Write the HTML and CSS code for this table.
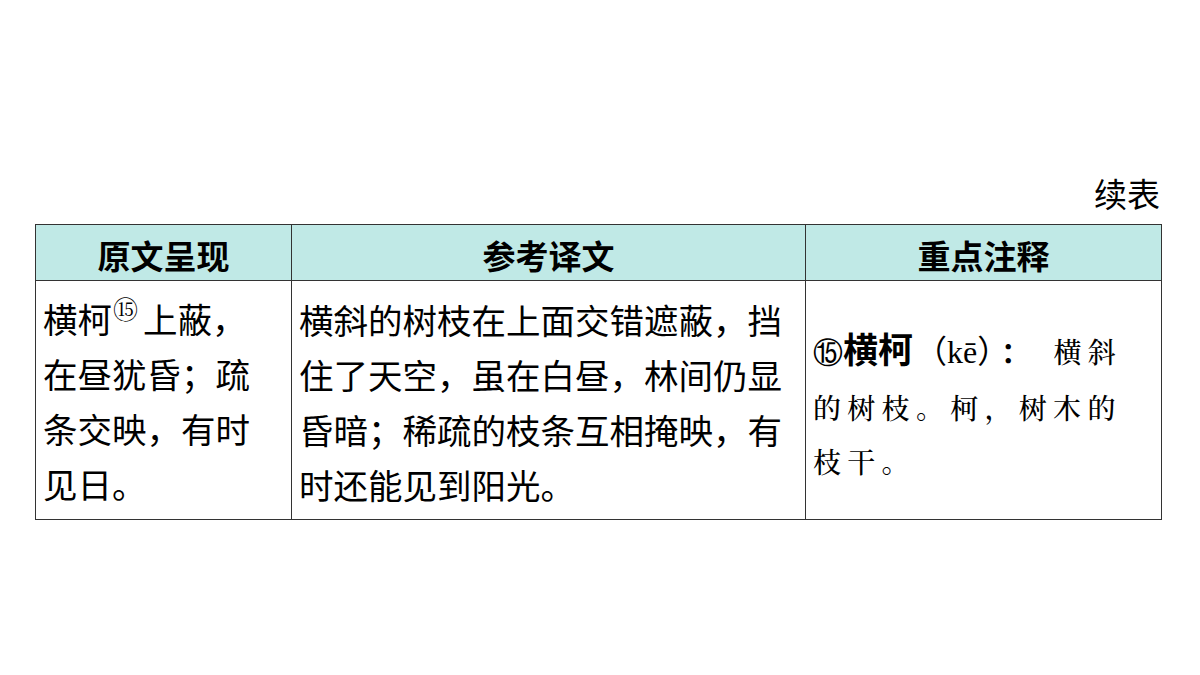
FILE: index.html
```html
<!DOCTYPE html>
<html lang="zh">
<head>
<meta charset="utf-8">
<link rel="stylesheet" href="styles.css">
</head>
<body>
<div class="page">
  <div class="caption">续表</div>
  <table class="notes">
    <colgroup>
      <col class="c1">
      <col class="c2">
      <col class="c3">
    </colgroup>
    <thead>
      <tr>
        <th>原文呈现</th>
        <th>参考译文</th>
        <th>重点注释</th>
      </tr>
    </thead>
    <tbody>
      <tr>
        <td class="orig">横柯<sup class="ref">⑮</sup>上蔽，在昼犹昏；疏条交映，有时见日。</td>
        <td class="trans">横斜的树枝在上面交错遮蔽，挡住了天空，虽在白昼，林间仍显昏暗；稀疏的枝条互相掩映，有时还能见到阳光。</td>
        <td class="note"><span class="num">⑮</span><b class="term">横柯</b><span class="py">（kē）</span><b class="colon">：</b>横斜的树枝。柯，树木的枝干。</td>
      </tr>
    </tbody>
  </table>
</div>
</body>
</html>
```

FILE: styles.css
```css
html, body {
  margin: 0;
  padding: 0;
  background: #ffffff;
}
body {
  font-family: "Noto Sans CJK SC", "Noto Sans", sans-serif;
  color: #000;
}
.page {
  width: 1126px;
  padding: 170px 0 0 35px;
}
.caption {
  text-align: right;
  font-size: 33px;
  line-height: 46px;
  height: 54px;
  padding-right: 1px;
}
.notes {
  width: 1127px;
  border-collapse: collapse;
  table-layout: fixed;
}
.c1 { width: 256px; }
.c2 { width: 514px; }
.c3 { width: 356px; }
.notes th, .notes td {
  border: 1px solid #333;
  padding: 0 7px;
  box-sizing: border-box;
}
.notes th {
  background: #c0e9e6;
  font-size: 33px;
  font-weight: 700;
  height: 56px;
  line-height: 40px;
  text-align: center;
  padding-top: 4px;
}
.notes td {
  font-size: 34.5px;
  line-height: 55px;
  height: 239px;
  vertical-align: top;
  text-align: left;
}
.notes td.orig {
  padding-top: 10px;
  padding-right: 24px;
}
.notes td.trans {
  padding-top: 11px;
}
.ref {
  font-family: "Liberation Serif", "Noto Serif CJK SC", serif;
  font-size: 25px;
  vertical-align: 14px;
  line-height: 0;
  margin-left: 1px;
  margin-right: 5px;
}
.notes td.note {
  font-family: "Noto Serif CJK SC", "AR PL UMing CN", "Noto Sans CJK SC", serif;
  font-size: 28px;
  font-weight: 500;
  letter-spacing: 6.3px;
  line-height: 54px;
  padding-top: 40px;
  padding-right: 22px;
  color: #000;
}
.num {
  font-family: "Liberation Serif", serif;
  font-size: 30px;
  font-weight: 400;
  letter-spacing: 0;
}
.term {
  font-family: "Noto Sans CJK SC", sans-serif;
  font-weight: 700;
  font-size: 35px;
  letter-spacing: 0;
}
.py {
  font-family: "Liberation Serif", "Noto Sans CJK SC", serif;
  font-weight: 400;
  letter-spacing: 0;
  font-size: 32px;
  margin-left: 2px;
}
.colon {
  font-family: "Noto Sans CJK SC", sans-serif;
  font-weight: 700;
  margin-left: 8px;
  margin-right: 18px;
}
```
